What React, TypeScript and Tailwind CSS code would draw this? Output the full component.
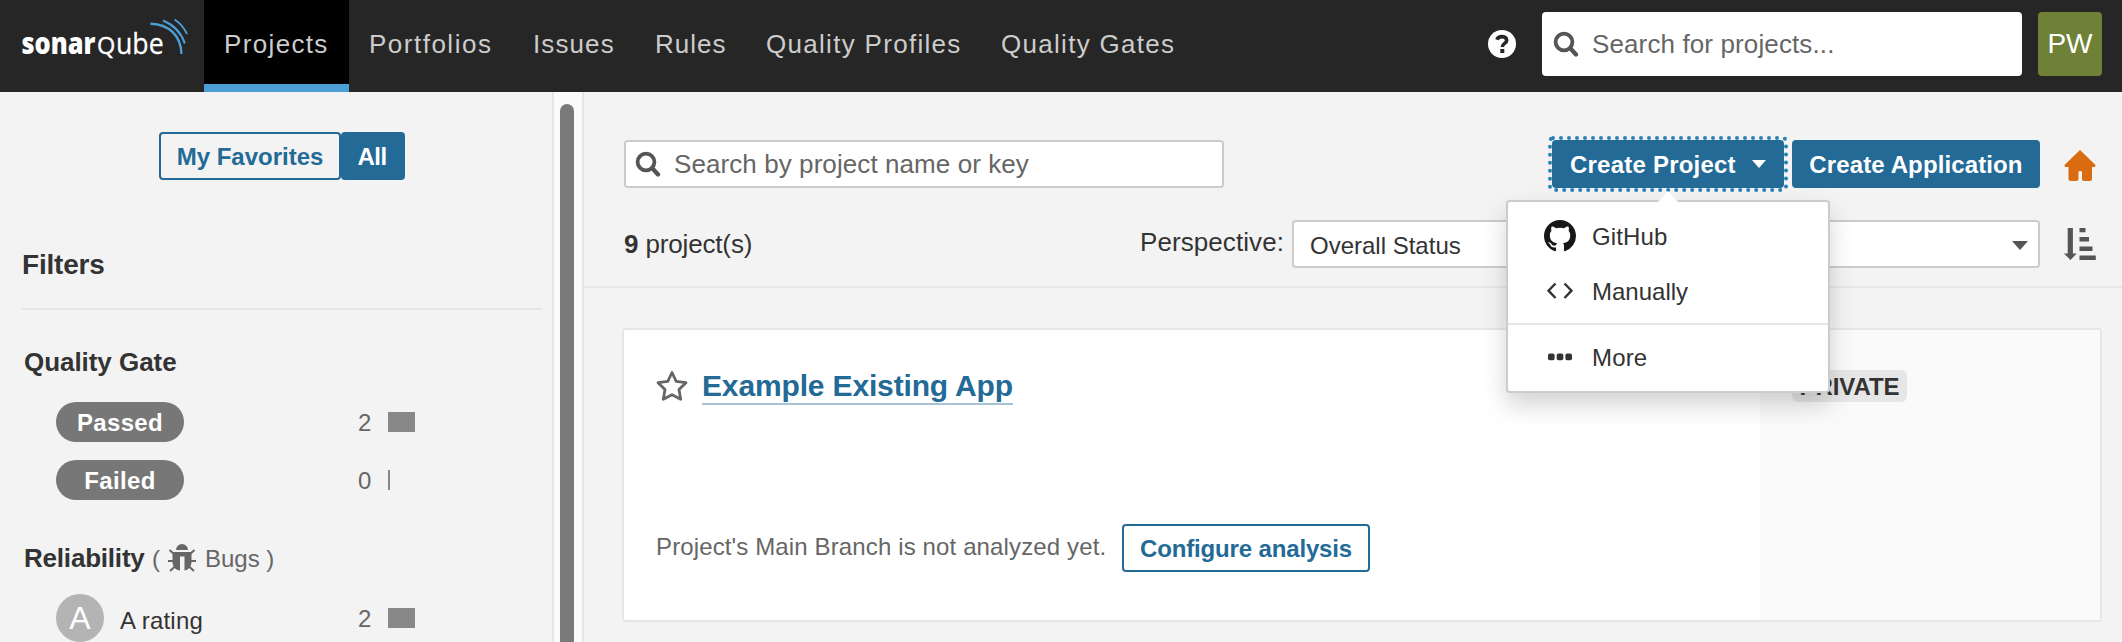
import React from 'react';

const Search = ({ className = '' }: { className?: string }) => (
  <svg viewBox="0 0 26 26" className={className} fill="none" stroke="#555" strokeWidth="3.8" strokeLinecap="round">
    <circle cx="11" cy="11" r="8.400" />
    <path d="M17.500 17.500 L23 23.500" strokeWidth="4.300" />
  </svg>
);

const Nav = ({ children, cls }: { children: React.ReactNode; cls: string }) => (
  <a className={`flex h-[92px] shrink-0 items-center pl-5 pb-1 text-[26px] whitespace-nowrap text-[#ccc] ${cls}`}>{children}</a>
);

const Bar = ({ n, w }: { n: number; w: string }) => (
  <div className="flex items-center">
    <span className="mt-[2px] mr-4 w-[14px] text-[24px] leading-none text-[#666]">{n}</span>
    <span className={`h-5 bg-[#888] ${w}`} />
  </div>
);

export default function App() {
  return (
    <div className="h-[642px] w-[2122px] overflow-hidden bg-[#f3f3f3] font-['Liberation_Sans',Arial,sans-serif] text-[26px] leading-[32px] text-[#333]">
      <header className="flex h-[92px] items-center bg-[#262626]">
        <div className="h-[92px] w-[204px] shrink-0">
          <svg viewBox="0 0 204 92" className="h-[92px] w-[204px]">
            <text transform="translate(21.500 54) scale(0.87 1)" fontFamily="Open Sans" fontSize="29.500" fontWeight="800" fill="#fff" textLength="85" lengthAdjust="spacingAndGlyphs">sonar</text>
            <text transform="translate(97 54)" fontFamily="Open Sans" fontSize="23.500" fontWeight="400" fill="#fff" stroke="#fff" strokeWidth="0.400">Q</text>
            <text transform="translate(116 54) scale(0.89 1)" fontFamily="Open Sans" fontSize="30" fontWeight="400" fill="#fff" stroke="#fff" strokeWidth="0.300">ube</text>
            <g fill="none" stroke="#4b9fd5">
              <path d="M150.500 23.700 C169 24 181 36 181.500 54" strokeWidth="2.400" />
              <path d="M163 20.500 C174 25 181 32 184.800 43.500" strokeWidth="2.100" />
              <path d="M174.500 19.500 C180 23 184 27.500 187 34" strokeWidth="1.800" />
            </g>
          </svg>
        </div>
        <Nav cls="w-[145px] border-b-8 border-[#4b9fd5] bg-black pt-1 pb-0! tracking-[1.350px]">Projects</Nav>
        <Nav cls="w-[164px] tracking-[1.500px]">Portfolios</Nav>
        <Nav cls="w-[122px] tracking-[1.100px]">Issues</Nav>
        <Nav cls="w-[111px] tracking-[1.000px]">Rules</Nav>
        <Nav cls="w-[235px] tracking-[1.300px]">Quality Profiles</Nav>
        <Nav cls="w-[220px] tracking-[1.300px]">Quality Gates</Nav>
        <div className="mb-1 ml-auto flex items-center">
          <svg viewBox="0 0 28 28" className="mr-[26px] h-7 w-7">
            <circle cx="14" cy="14" r="14" fill="#fff" />
            <path d="M9 9.800 C10 5.700 18.500 5.200 18.700 10.500 C18.700 13.500 14.300 13.400 14.300 17" fill="none" stroke="#262626" strokeWidth="3.600" />
            <rect x="12.300" y="19" width="4" height="4" fill="#262626" />
          </svg>
          <div className="flex h-16 w-[480px] items-center rounded-[4px] bg-white pl-[11px]">
            <Search className="h-[26px] w-[26px]" />
            <span className="ml-[13px] tracking-[0.120px] text-[#666]">Search for projects...</span>
          </div>
          <div className="mr-5 ml-4 flex h-16 w-16 items-center justify-center rounded-[4px] bg-[#6f8037] text-[28px] text-white">PW</div>
        </div>
      </header>

      <div className="flex h-[550px]">
        <aside className="h-full w-[552px] shrink-0 pl-[22px]">
          <div className="flex pt-10 pl-[137px] font-bold">
            <div className="flex h-12 w-[182px] items-center justify-center rounded-[4px] border-2 border-[#236a97] pt-[2px] text-[24px] text-[#236a97]">My Favorites</div>
            <div className="flex h-12 w-16 items-center justify-center rounded-[4px] bg-[#236a97] pt-[2px] pr-[2px] text-[24px] tracking-[-0.500px] text-white">All</div>
          </div>
          <h2 className="mt-[69px] text-[28px] font-bold tracking-[-0.200px]">Filters</h2>
          <div className="mt-[27px] h-[2px] w-[520px] bg-[#e6e6e6]" />
          <h3 className="mt-9 pl-[2px] text-[26px] font-bold tracking-[-0.050px]">Quality Gate</h3>
          <div className="mt-6 flex items-center pl-[34px]">
            <span className="mr-[174px] flex h-10 w-32 items-center justify-center rounded-full bg-[#777] pt-px text-[24px] font-bold tracking-[0.350px] text-white">Passed</span>
            <Bar n={2} w="w-[27px]" />
          </div>
          <div className="mt-[18px] flex items-center pl-[34px]">
            <span className="mr-[174px] flex h-10 w-32 items-center justify-center rounded-full bg-[#777] pt-px text-[24px] font-bold tracking-[0.350px] text-white">Failed</span>
            <Bar n={0} w="w-[2px]" />
          </div>
          <div className="mt-[42px] flex h-8 items-center pl-[2px] text-[24px] text-[#666]">
            <b className="w-[120px] text-[26px] tracking-[-0.200px] whitespace-nowrap text-[#333]">Reliability</b>
            <span className="mt-px ml-2">(</span>
            <svg viewBox="0 0 28 28" className="mr-[9px] ml-2 h-7 w-7" fill="#666" stroke="#666">
              <path stroke="none" d="M8 6 a6 6 0 0 1 12 0z M4.500 8 H23.500 V18 C23.500 23 20 26 16.500 26.500 V12.500 H12 V26.500 C8 26 4.500 23 4.500 18z" />
              <path fill="none" strokeWidth="2" d="M1.500 6 L6 10 M26.500 6 L22 10 M0 17 H5 M23 17 H28 M2 27 L7 22.500 M26 27 L21 22.500" />
            </svg>
            <span className="mt-px">Bugs )</span>
          </div>
          <div className="mt-[20px] flex items-center pl-[34px]">
            <span className="flex h-12 w-12 items-center justify-center rounded-full bg-[#b4b4b4] text-[32px] text-white">A</span>
            <span className="mt-[5px] mr-[154px] ml-4 w-[84px] text-[24px] tracking-[0.200px] whitespace-nowrap">A rating</span>
            <Bar n={2} w="w-[27px]" />
          </div>
        </aside>
        <div className="h-full w-[32px] shrink-0 border-x-2 border-[#e6e6e6] bg-[#fafafa] px-[6px] pt-3">
          <div className="h-[600px] w-[14px] rounded-full bg-[#797979]" />
        </div>

        <main className="h-full w-[1538px]">
          <div className="mt-12 flex h-12 items-center pl-[40px]">
            <div className="flex h-12 w-[600px] items-center rounded-[4px] border-2 border-[#ccc] bg-white pl-[9px]">
              <Search className="h-[26px] w-[26px]" />
              <span className="ml-[13px] tracking-[0.080px] text-[#666]">Search by project name or key</span>
            </div>
            <div className="relative ml-[328px] flex h-12 w-[232px] items-center rounded-[4px] bg-[#236a97] pl-[18px] text-[24px] font-bold text-white">
              <svg viewBox="0 0 240 56" className="absolute -top-1 -left-1 h-14 w-60">
                <rect x="2" y="2" width="236" height="52" rx="3" fill="none" stroke="#2c7fb5" strokeWidth="4" strokeLinecap="round" strokeDasharray="0 8" />
              </svg>
              <span className="mt-[2px] tracking-[0.220px]">Create Project</span>
              <svg viewBox="0 0 14 8" className="ml-4 h-2 w-[14px]"><path d="M0 0H14L7 8z" fill="#fff" /></svg>
              <div className="absolute top-[60px] left-[-46px] z-10 h-[193px] w-[324px] rounded-[4px] border-2 border-[#ccc] bg-white pt-[18px] text-[24px] font-normal text-[#333] shadow-[0_12px_24px_rgba(0,0,0,0.175)]">
                <svg viewBox="0 0 24 14" className="absolute top-[-12px] left-[148px] h-[14px] w-6"><path d="M0 14L12 1L24 14z" fill="#fff" /></svg>
                <div className="flex h-[32px] items-center pl-[36px]">
                  <svg viewBox="0 0 16 16" className="h-8 w-8"><path fill="#191717" d="M8 0C3.580 0 0 3.580 0 8c0 3.540 2.290 6.530 5.470 7.590.4.070.55-.17.55-.38 0-.19-.01-.82-.01-1.490-2.010.37-2.530-.49-2.690-.94-.09-.23-.48-.94-.82-1.130-.28-.15-.68-.52-.01-.53.63-.01 1.080.58 1.230.82.72 1.210 1.870.87 2.330.66.070-.52.28-.87.51-1.070-1.780-.2-3.640-.89-3.640-3.950 0-.87.31-1.590.82-2.150-.08-.2-.36-1.020.08-2.120 0 0 .67-.21 2.200.82.64-.18 1.320-.27 2-.27s1.360.09 2 .27c1.530-1.040 2.200-.82 2.200-.82.44 1.100.16 1.920.08 2.120.51.56.82 1.270.82 2.150 0 3.070-1.870 3.750-3.650 3.950.29.25.54.73.54 1.480 0 1.070-.01 1.930-.01 2.200 0 .21.15.46.55.38A8.013 8.013 0 0 0 16 8c0-4.420-3.580-8-8-8z" /></svg>
                  <span className="mt-[2px] ml-4 tracking-[0.150px]">GitHub</span>
                </div>
                <div className="mt-6 flex h-8 items-center pl-[36px]">
                  <svg viewBox="0 0 32 32" className="h-8 w-8" fill="none" stroke="#333" strokeWidth="2.400"><path d="M11.500 7.500L4.500 14.700L11.500 22M20.500 7.500L27.500 14.700L20.500 22" /></svg>
                  <span className="ml-4">Manually</span>
                </div>
                <div className="mt-[15px] h-[2px] bg-[#e6e6e6]" />
                <div className="mt-[17px] flex h-8 items-center pl-[36px]">
                  <svg viewBox="0 0 32 32" className="h-8 w-8" fill="#333"><rect x="4" y="11.500" width="6.600" height="6.800" rx="1.800" /><rect x="12.700" y="11.500" width="6.600" height="6.800" rx="1.800" /><rect x="21.400" y="11.500" width="6.600" height="6.800" rx="1.800" /></svg>
                  <span className="ml-4 tracking-[0.150px]">More</span>
                </div>
              </div>
            </div>
            <div className="ml-2 flex h-12 w-[248px] items-center justify-center rounded-[4px] bg-[#236a97] pt-[2px] text-[24px] font-bold tracking-[0.120px] whitespace-nowrap text-white">Create Application</div>
            <svg viewBox="0 0 32 32" preserveAspectRatio="none" className="mt-[2px] ml-6 h-[31px] w-8"><path fill="#d96b11" d="M16 0L31.500 15.500Q32 17.500 30 17.500H28V30Q28 32 26 32H20Q18 32 18 30V22H14.500V30Q14.500 32 12.500 32H6.500Q4.500 32 4.500 30V17.500H2Q0 17.500.5 15.500z" /></svg>
          </div>
          <div className="mt-8 flex h-12 items-center pl-[40px]">
            <span className="w-[516px] tracking-[-0.150px]"><b>9</b> project(s)</span>
            <span className="mb-1 w-[152px] tracking-[0.080px]">Perspective:</span>
            <div className="flex h-12 w-[748px] items-center justify-between rounded-[4px] border-2 border-[#ccc] bg-white pr-[10px] pl-4 text-[24px]">
              <span className="mt-[3px]">Overall Status</span>
              <svg viewBox="0 0 16 9" className="mt-[2px] h-[9px] w-4"><path d="M0 0H16L8 9z" fill="#555" /></svg>
            </div>
            <svg viewBox="0 0 32 32" className="ml-6 h-8 w-8" fill="#555"><path d="M3.700 0h5.200v25.500h3.800L6.500 32L0 25.500h3.700zM15.500 0h6v4.300h-6zM15.500 9h9.500v4.600h-9.500zM15.500 18.400h13v4.600h-13zM15.500 27.500h16.300v4.500h-16.300z" /></svg>
          </div>
          <div className="mt-[18px] h-[2px] bg-[#e6e6e6]" />
          <div className="mt-10 ml-[38px] flex h-[294px] w-[1480px] rounded-[4px] border-2 border-[#e6e6e6] bg-white">
            <div className="w-[1136px] pl-8">
              <div className="flex items-center pt-[38px]">
                <svg viewBox="0 0 32 32" className="mb-[2px] h-8 w-8" fill="none" stroke="#666" strokeWidth="2.800" strokeLinejoin="round"><path d="M16 2.500L20.200 11.300L30 12.700L23 19.500L24.700 29.300L16 24.700L7.300 29.300L9 19.500L2 12.700L11.800 11.300z" /></svg>
                <span className="ml-[14px] border-b-2 border-[#a7c3d5] pt-px text-[30px] leading-[34px] font-bold tracking-[-0.150px] text-[#236a97]">Example Existing App</span>
              </div>
              <div className="mt-[119px] flex items-center">
                <span className="mb-[2px] w-[466px] text-[24px] tracking-[0.130px] whitespace-nowrap text-[#666]">Project's Main Branch is not analyzed yet.</span>
                <div className="flex h-12 w-[248px] items-center justify-center rounded-[4px] border-2 border-[#236a97] pt-[2px] text-[24px] font-bold tracking-[-0.150px] whitespace-nowrap text-[#236a97]">Configure analysis</div>
              </div>
            </div>
            <div className="flex-1 bg-[#fafafa] pt-10 pl-8">
              <span className="flex h-8 w-[115px] items-center justify-center rounded-[6px] bg-[#e6e6e6] pt-px text-[24px] font-bold tracking-[-0.100px]">PRIVATE</span>
            </div>
          </div>
        </main>
      </div>
    </div>
  );
}
